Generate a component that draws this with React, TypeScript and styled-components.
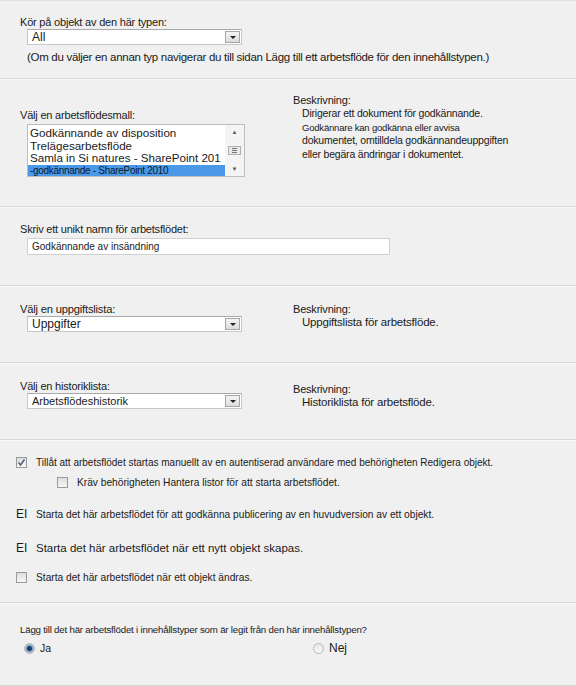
import styled, { createGlobalStyle } from 'styled-components';

const GlobalStyle = createGlobalStyle`
	html, body {
		margin: 0;
		padding: 0;
		background: #f0f0f0;
	}
	body {
		font-family: 'Liberation Sans', Arial, sans-serif;
		color: #1a1a1a;
	}
`;

const Page = styled.div`
	width: 576px;
	height: 686px;
	overflow: hidden;
	background: #f0f0f0;
	border-top: 2px solid #e4e4e4;
	box-sizing: border-box;
`;

const Section = styled.section<{ $h: number; $pt: number }>`
	height: ${(p) => p.$h}px;
	padding: ${(p) => p.$pt}px 0 0 20px;
	box-sizing: border-box;
	border-bottom: 1px solid #d7d7d7;
	box-shadow: inset 0 1px 0 #f8f8f8;
`;

const Columns = styled.div`
	display: grid;
	grid-template-columns: 273px 1fr;
`;

const Label = styled.div<{ $size?: number }>`
	font-size: ${(p) => p.$size ?? 11}px;
	line-height: 13px;
	letter-spacing: -0.2px;
	white-space: nowrap;
`;

const Indent = styled.div`
	padding-left: 7px;
`;

const SelectBox = styled.div<{ $w?: number }>`
	width: ${(p) => p.$w ?? 215}px;
	height: 16px;
	display: flex;
	align-items: center;
	justify-content: space-between;
	background: #fff;
	border: 1px solid #c8c8c8;
	border-top-color: #a9a9a9;
	box-sizing: border-box;
	padding-left: 4px;
	font-size: 12px;
`;

const ArrowBtn = styled.div`
	width: 15px;
	height: 12px;
	margin-right: 1px;
	display: flex;
	align-items: center;
	justify-content: center;
	background: linear-gradient(#f4f4f4, #dcdcdc);
	border: 1px solid #a6a6a6;
	box-sizing: border-box;
	&::after {
		content: '';
		border-left: 3px solid transparent;
		border-right: 3px solid transparent;
		border-top: 3px solid #222;
	}
`;

const Note = styled.div`
	font-size: 11.5px;
	letter-spacing: -0.3px;
	margin-top: 6px;
`;

const ListBox = styled.div`
	width: 218px;
	height: 53px;
	display: flex;
	background: #fff;
	border: 1px solid #bdbdbd;
	box-sizing: border-box;
	margin-top: 2px;
`;

const Items = styled.div`
	flex: 1;
	overflow: hidden;
	padding-top: 2px;
`;

const Item = styled.div<{ $sel?: boolean }>`
	font-size: ${(p) => (p.$sel ? 10 : 11.6)}px;
	line-height: 12.5px;
	height: 12.5px;
	padding-left: 2px;
	white-space: nowrap;
	letter-spacing: ${(p) => (p.$sel ? -0.3 : 0)}px;
	background: ${(p) => (p.$sel ? '#4a98e8' : 'transparent')};
	color: ${(p) => (p.$sel ? '#0b1a2e' : '#1a1a1a')};
`;

const ScrollBar = styled.div`
	width: 19px;
	background: #f4f4f4;
	display: flex;
	flex-direction: column;
	align-items: center;
	justify-content: space-between;
	padding: 4px 0 4px;
	box-sizing: border-box;
	font-size: 6px;
	color: #555;
`;

const Thumb = styled.div`
	width: 13px;
	height: 9px;
	border: 1px solid #b0b0b0;
	background: #e8e8e8;
	box-sizing: border-box;
	display: flex;
	flex-direction: column;
	justify-content: center;
	gap: 1px;
	padding: 0 3px;
	& > i {
		display: block;
		height: 1px;
		background: #777;
	}
`;

const TextInput = styled.div`
	width: 363px;
	height: 17px;
	background: #fff;
	border: 1px solid #d0d0d0;
	box-sizing: border-box;
	font-size: 10px;
	line-height: 15px;
	padding-left: 4px;
	margin-top: 2px;
`;

const DescBlock = styled.div<{ $size: number }>`
	padding-left: 9px;
	font-size: ${(p) => p.$size}px;
	line-height: 13.5px;
	letter-spacing: -0.2px;
	white-space: nowrap;
`;

const DescLine = styled.span<{ $size?: number }>`
	display: block;
	font-size: ${(p) => (p.$size ? `${p.$size}px` : 'inherit')};
`;

const Check = styled.span`
	width: 11px;
	height: 11px;
	flex: none;
	border: 1px solid #9a9a9a;
	background: linear-gradient(#dedede, #f6f6f6);
	box-sizing: border-box;
	display: inline-flex;
	align-items: center;
	justify-content: center;
`;

const OptRow = styled.div<{ $indent?: number; $mt: number; $size?: number }>`
	display: flex;
	align-items: center;
	gap: 9px;
	margin-left: ${(p) => (p.$indent ?? 0) - 4}px;
	margin-top: ${(p) => p.$mt}px;
	font-size: ${(p) => p.$size ?? 10.2}px;
	white-space: nowrap;
`;

const Glyph = styled.span`
	width: 11px;
	flex: none;
	font-size: 12px;
`;

const RadioRow = styled.div`
	display: grid;
	grid-template-columns: 289px 1fr;
	margin-top: 5px;
	padding-left: 4px;
`;

const RadioOpt = styled.label<{ $size: number }>`
	display: flex;
	align-items: center;
	gap: 5px;
	font-size: ${(p) => p.$size}px;
`;

const Radio = styled.span<{ $on?: boolean }>`
	width: 11px;
	height: 11px;
	border-radius: 50%;
	border: 1px solid #b8b8b8;
	box-sizing: border-box;
	background: ${(p) =>
		p.$on ? 'radial-gradient(circle, #1d3d66 0 2px, #7aa0c8 3px, #d6d6d6 5px)' : 'linear-gradient(#e4e4e4, #fafafa)'};
`;

const CheckMark = () => (
	<svg width="9" height="9" viewBox="0 0 9 9">
		<path d="M1.5 4.5 L3.5 7 L7.5 1.5" fill="none" stroke="#4a5a7a" strokeWidth="1.4" />
	</svg>
);

function Select({ value, w, size }: { value: string; w?: number; size?: number }) {
	return (
		<SelectBox $w={w} style={size ? { fontSize: size } : undefined}>
			<span>{value}</span>
			<ArrowBtn />
		</SelectBox>
	);
}

export default function App() {
	return (
		<Page>
			<GlobalStyle />
			<Section $h={77} $pt={14}>
				<Label>Kör på objekt av den här typen:</Label>
				<Indent>
					<Select value="All" />
					<Note>(Om du väljer en annan typ navigerar du till sidan Lägg till ett arbetsflöde för den innehållstypen.)</Note>
				</Indent>
			</Section>

			<Section $h={128} $pt={15}>
				<Columns>
					<div>
						<Label style={{ marginTop: 15 }}>Välj en arbetsflödesmall:</Label>
						<Indent>
							<ListBox>
								<Items>
									<Item>Godkännande av disposition</Item>
									<Item>Trelägesarbetsflöde</Item>
									<Item>Samla in Si natures - SharePoint 201</Item>
									<Item $sel>-godkännande - SharePoint 2010</Item>
								</Items>
								<ScrollBar>
									<span>▲</span>
									<Thumb>
										<i />
										<i />
										<i />
									</Thumb>
									<span>▼</span>
								</ScrollBar>
							</ListBox>
						</Indent>
					</div>
					<div>
						<Label>Beskrivning:</Label>
						<DescBlock $size={10.5}>
							<DescLine>Dirigerar ett dokument för godkännande.</DescLine>
							<DescLine $size={9.5}>Godkännare kan godkänna eller avvisa</DescLine>
							<DescLine>dokumentet, omtilldela godkännandeuppgiften</DescLine>
							<DescLine>eller begära ändringar i dokumentet.</DescLine>
						</DescBlock>
					</div>
				</Columns>
			</Section>

			<Section $h={79} $pt={16}>
				<Label>Skriv ett unikt namn för arbetsflödet:</Label>
				<Indent>
					<TextInput>Godkännande av insändning</TextInput>
				</Indent>
			</Section>

			<Section $h={77} $pt={17}>
				<Columns>
					<div>
						<Label $size={11.2}>Välj en uppgiftslista:</Label>
						<Indent>
							<Select value="Uppgifter" />
						</Indent>
					</div>
					<div>
						<Label>Beskrivning:</Label>
						<DescBlock $size={11.5}>Uppgiftslista för arbetsflöde.</DescBlock>
					</div>
				</Columns>
			</Section>

			<Section $h={77} $pt={17}>
				<Columns>
					<div>
						<Label>Välj en historiklista:</Label>
						<Indent>
							<Select value="Arbetsflödeshistorik" size={11} />
						</Indent>
					</div>
					<div style={{ paddingTop: 3 }}>
						<Label>Beskrivning:</Label>
						<DescBlock $size={11.5}>Historiklista för arbetsflöde.</DescBlock>
					</div>
				</Columns>
			</Section>

			<Section $h={163} $pt={17}>
				<OptRow $mt={0} $size={10}>
					<Check>
						<CheckMark />
					</Check>
					Tillåt att arbetsflödet startas manuellt av en autentiserad användare med behörigheten Redigera objekt.
				</OptRow>
				<OptRow $mt={9} $indent={41}>
					<Check />
					Kräv behörigheten Hantera listor för att starta arbetsflödet.
				</OptRow>
				<OptRow $mt={19}>
					<Glyph>EI</Glyph>
					Starta det här arbetsflödet för att godkänna publicering av en huvudversion av ett objekt.
				</OptRow>
				<OptRow $mt={20} $size={11.5}>
					<Glyph>EI</Glyph>
					Starta det här arbetsflödet när ett nytt objekt skapas.
				</OptRow>
				<OptRow $mt={17}>
					<Check />
					Starta det här arbetsflödet när ett objekt ändras.
				</OptRow>
			</Section>

			<Section $h={83} $pt={20}>
				<Label $size={9.7}>Lägg till det här arbetsflödet i innehållstyper som är legit från den här innehållstypen?</Label>
				<RadioRow>
					<RadioOpt $size={10.5}>
						<Radio $on />
						Ja
					</RadioOpt>
					<RadioOpt $size={12}>
						<Radio />
						Nej
					</RadioOpt>
				</RadioRow>
			</Section>
		</Page>
	);
}
